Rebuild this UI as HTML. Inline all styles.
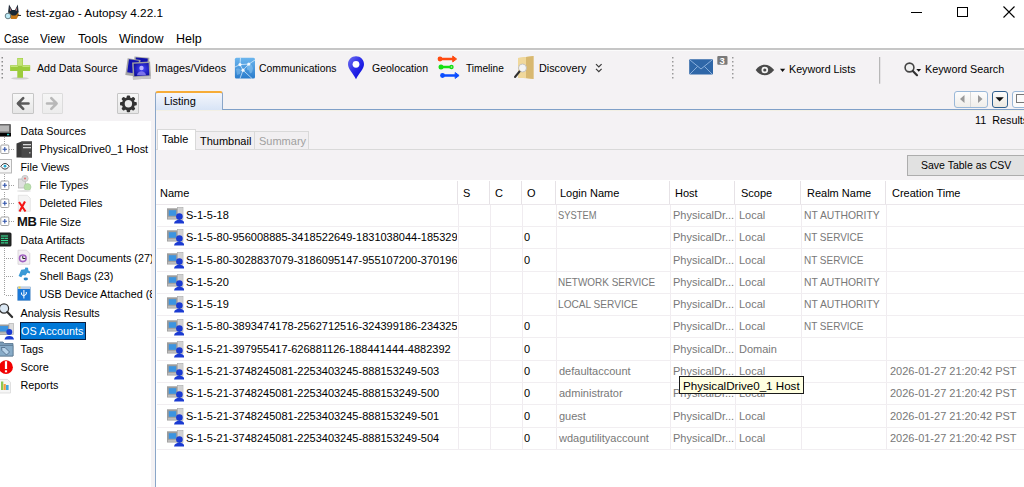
<!DOCTYPE html>
<html><head><meta charset="utf-8">
<style>
*{box-sizing:border-box}
html,body{margin:0;padding:0}
body{width:1024px;height:487px;overflow:hidden;position:relative;background:#f4f2f4;font-family:"Liberation Sans",sans-serif;color:#000}
.a{position:absolute}
.t{position:absolute;white-space:pre;font-size:11px;line-height:13px}
#title{left:0;top:0;width:1024px;height:30px;background:#fff}
#menu{left:0;top:30px;width:1024px;height:18px;background:#fff}
#mline{left:0;top:48px;width:1024px;height:2px;background:#c6c6c6}
#tbar{left:0;top:50px;width:1024px;height:38px;background:#f4f2f4;border-top:1px solid #fbfbfb}
#left{left:0;top:121px;width:151px;height:366px;background:#fff}
#vline{left:155px;top:110px;width:1px;height:377px;background:#8aa6c8}
#tabline{left:155px;top:109px;width:869px;height:1px;background:#7fa0c8}
#table{left:156px;top:180px;width:868px;height:307px;background:#fff}
.g{color:#787878}
.hd{border-left:1px solid #e8e4e8}
.rl{position:absolute;left:157px;width:867px;height:1px;background:#f1eef1}
.ic{position:absolute;left:167px;width:17px;height:18px;display:block}
.nm{left:186px;width:271px;overflow:hidden}
.tr{position:absolute;white-space:pre;font-size:10.8px;line-height:13px}
#left{overflow:hidden}
</style></head><body>
<div id="title" class="a"></div>
<div id="menu" class="a"></div>
<div id="mline" class="a"></div>
<div id="tbar" class="a"></div>
<div id="left" class="a"></div>
<div id="table" class="a"></div>
<div id="tabline" class="a"></div>
<div id="vline" class="a"></div>

<!-- title -->
<div class="t" style="left:26px;top:6px;font-size:11.8px;line-height:14px">test-zgao - Autopsy 4.22.1</div>
<div class="a" style="left:911px;top:12px;width:11px;height:1px;background:#000"></div>
<div class="a" style="left:957px;top:7px;width:11px;height:10px;border:1px solid #000"></div>
<svg class="a" style="left:1003px;top:6px" width="12" height="12"><path d="M0.5 0.5L11.5 11.5M11.5 0.5L0.5 11.5" stroke="#000" stroke-width="1.1"/></svg>

<!-- menu -->
<div class="t" style="left:4px;top:32px;font-size:12.5px;line-height:14px;transform:scaleX(0.85);transform-origin:0 0">Case</div>
<div class="t" style="left:40px;top:32px;font-size:12.5px;line-height:14px;transform:scaleX(0.93);transform-origin:0 0">View</div>
<div class="t" style="left:78px;top:32px;font-size:12.5px;line-height:14px">Tools</div>
<div class="t" style="left:119px;top:32px;font-size:12.5px;line-height:14px">Window</div>
<div class="t" style="left:176px;top:32px;font-size:12.5px;line-height:14px">Help</div>

<!-- toolbar -->
<div class="t" style="left:37px;top:62px;font-size:10.6px">Add Data Source</div>
<div class="t" style="left:155px;top:62px;font-size:10.8px">Images/Videos</div>
<div class="t" style="left:259px;top:62px;font-size:10.4px">Communications</div>
<div class="t" style="left:372px;top:62px;font-size:10.5px">Geolocation</div>
<div class="t" style="left:466px;top:62px;font-size:10.1px">Timeline</div>
<div class="t" style="left:539px;top:62px;font-size:10.8px">Discovery</div>
<div class="t" style="left:789px;top:63px;font-size:10.7px">Keyword Lists</div>
<div class="t" style="left:925px;top:63px;font-size:10.8px">Keyword Search</div>

<!-- toolbar icons -->
<svg class="a" style="left:0;top:50px" width="1024" height="38">
  <g fill="#8c8c8c">
    <rect x="1.5" y="7" width="1.5" height="1.5"/><rect x="1.5" y="11" width="1.5" height="1.5"/><rect x="1.5" y="15" width="1.5" height="1.5"/><rect x="1.5" y="19" width="1.5" height="1.5"/><rect x="1.5" y="23" width="1.5" height="1.5"/><rect x="1.5" y="27" width="1.5" height="1.5"/>
  </g>
  <!-- plus -->
  <ellipse cx="20" cy="28.3" rx="9" ry="1.2" fill="#d0d0d0"/>
  <path d="M17.3 8h5.7v7.2h7.2v5.7h-7.2v6.8h-5.7v-6.8h-7.2v-5.7h7.2z" fill="#9ccc3c"/>
  <path d="M17.8 8.5h4.7v7.2h7.2v1.2h-7.2v-1.2h-4.7v1.2h-7.2v-1.2h7.2z" fill="#c4e47a"/>
  <!-- images/videos -->
  <g transform="translate(126,7)">
    <rect x="8" y="0" width="15" height="11" fill="#a8a8a8" transform="rotate(5 15 5)"/>
    <rect x="9.5" y="1" width="12" height="6" fill="#1010a8" transform="rotate(5 15 5)"/>
    <rect x="0.5" y="2" width="13" height="17" fill="#a4a4a4" transform="rotate(8 7 10)"/>
    <rect x="2" y="3" width="10" height="13" fill="#1212b0" transform="rotate(8 7 10)"/>
    <rect x="6.5" y="5" width="18" height="17" fill="#a0a0a0" transform="rotate(-3 15 13)"/>
    <rect x="6.5" y="19.5" width="18" height="2.5" fill="#c4c4c4" transform="rotate(-3 15 13)"/>
    <rect x="8" y="6.3" width="15" height="12.5" fill="url(#ivg)" transform="rotate(-3 15 13)"/>
    <circle cx="15.5" cy="11" r="2.2" fill="#c8c0ff" opacity="0.9"/>
    <path d="M11 18.3c0.5-3 2.5-4 4.5-4s4 1 4.5 4z" fill="#8a80f0" opacity="0.85"/>
  </g>
  <!-- communications -->
  <defs>
    <linearGradient id="cg" x1="0" y1="0" x2="0" y2="1"><stop offset="0" stop-color="#6cb6ee"/><stop offset="1" stop-color="#2a7ccc"/></linearGradient>
    <radialGradient id="ivg" cx="0.55" cy="0.45" r="0.7"><stop offset="0" stop-color="#4848ff"/><stop offset="1" stop-color="#0a0a98"/></radialGradient>
    <linearGradient id="pg" x1="0" y1="0" x2="1" y2="1"><stop offset="0" stop-color="#7070f0"/><stop offset="0.5" stop-color="#2a2ae8"/><stop offset="1" stop-color="#0000d8"/></linearGradient>
  </defs>
  <rect x="234.9" y="7.7" width="20.1" height="20.8" rx="1.5" fill="url(#cg)"/>
  <path d="M247 14.5c2-1 4-0.5 5 1l1 3-1 4-2 1-1-3-2-1z" fill="#8cc4f0" opacity="0.6"/>
  <path d="M236 19c2-1 4 0 5 1l-1 4-3 1z" fill="#8cc4f0" opacity="0.5"/>
  <g stroke="#eaf6ff" stroke-width="0.9" fill="none" opacity="0.75">
    <path d="M240.5 7.7l-0.5 6.9 8.8-0.5 6.2-4.1M235 17l5-2.4 3 5.6-3 8.3M243 20.2l5.8-6.1M243 20.2l9 8.3"/>
  </g>
  <circle cx="240" cy="14.6" r="1.6" fill="#fff" opacity="0.9"/><circle cx="248.8" cy="14.1" r="1.6" fill="#fff" opacity="0.9"/><circle cx="243" cy="20.2" r="1.6" fill="#fff" opacity="0.9"/>
  <!-- geolocation -->
  <path d="M356 6.3c-4.5 0-8 3.5-8 8 0 4.5 5 9 8 15 3-6 8-10.5 8-15 0-4.5-3.5-8-8-8z" fill="url(#pg)"/>
  <circle cx="356" cy="14.3" r="3.4" fill="#fff"/>
  <!-- timeline -->
  <g stroke-width="2.6" stroke-linecap="round">
    <path d="M440 9h14" stroke="#ff4a10"/><circle cx="440" cy="9" r="2.4" fill="#ff4a10" stroke="none"/><path d="M453 6.3l3.6 2.7-3.6 2.7z" fill="#ff4a10" stroke="#ff4a10" stroke-width="1"/>
    <path d="M441 17h10" stroke="#12e012"/><circle cx="441" cy="17" r="2.5" fill="#12e012" stroke="none"/><circle cx="451.5" cy="17" r="2.2" fill="#12e012" stroke="none"/><circle cx="451.5" cy="17" r="0.8" fill="#c0f0c0" stroke="none"/>
    <path d="M442.5 25.5h14" stroke="#0a4cff"/><circle cx="442.5" cy="25.5" r="2.4" fill="#0a4cff" stroke="none"/><path d="M455.5 22.8l3.6 2.7-3.6 2.7z" fill="#0a4cff" stroke="#0a4cff" stroke-width="1"/>
  </g>
  <!-- discovery -->
  <path d="M518 8l15.5-2v23l-15.5-1.5z" fill="#e8cc8c"/>
  <path d="M526 7l7.5-1v23l-7.5-1z" fill="#d8b870"/>
  <path d="M518 8l8 -1v21l-8 0z" fill="#f0d89c"/>
  <circle cx="522.5" cy="18" r="4" fill="#f4f4f4" stroke="#b8b8b8" stroke-width="0.8"/>
  <path d="M519.5 21.5l-4.5 5.5" stroke="#303030" stroke-width="2" stroke-linecap="round"/>
  <!-- chevron -->
  <path d="M596 14.2l2.8 2.8 2.8-2.8M596 18.8l2.8 2.8 2.8-2.8" stroke="#3a3a3a" stroke-width="1.2" fill="none"/>
  <!-- separators -->
  <g fill="#9a9a9a">
    <rect x="672" y="7" width="1.5" height="1.5"/><rect x="672" y="11" width="1.5" height="1.5"/><rect x="672" y="15" width="1.5" height="1.5"/><rect x="672" y="19" width="1.5" height="1.5"/><rect x="672" y="23" width="1.5" height="1.5"/><rect x="672" y="27" width="1.5" height="1.5"/>
    <rect x="732" y="7" width="1.5" height="1.5"/><rect x="732" y="11" width="1.5" height="1.5"/><rect x="732" y="15" width="1.5" height="1.5"/><rect x="732" y="19" width="1.5" height="1.5"/><rect x="732" y="23" width="1.5" height="1.5"/><rect x="732" y="27" width="1.5" height="1.5"/>
  </g>
  <!-- mail -->
  <rect x="689.2" y="9.2" width="23.8" height="15.4" rx="1" fill="#2f67a8"/>
  <path d="M690 10l11 9 11-9M690 24l7.5-7.5M712 24l-7.5-7.5" stroke="#9fc0e8" stroke-width="0.8" fill="none"/>
  <rect x="717.3" y="5.9" width="10.2" height="8.8" rx="1" fill="#7a7a7a"/>
  <text x="719.5" y="13.6" font-family="Liberation Sans" font-size="9.5" font-weight="bold" fill="#fff">3</text>
  <!-- eye -->
  <path d="M755.7 20c2.5-3.5 5.5-5.2 9-5.2s6.5 1.7 9.5 5.2c-3 3.5-6 5.2-9.5 5.2s-6.5-1.7-9-5.2z" fill="#4a4a4a"/>
  <circle cx="764.8" cy="20" r="3.3" fill="#f4f4f4"/><circle cx="764.8" cy="20" r="1.6" fill="#4a4a4a"/>
  <path d="M780 18.7h5.2l-2.6 3.3z" fill="#111"/>
  <!-- separator solid -->
  <rect x="879.2" y="7" width="1" height="26.7" fill="#a8a8a8"/>
  <!-- magnifier -->
  <circle cx="909.5" cy="17.5" r="4.4" fill="#f0f0f0" stroke="#444" stroke-width="1.6"/>
  <path d="M912.8 21l4.2 4.2" stroke="#333" stroke-width="2.2" stroke-linecap="round"/>
  <path d="M916.3 19h4.8l-2.4 2.8z" fill="#111"/>
</svg>

<!-- app icon -->
<svg class="a" style="left:0;top:0" width="24" height="22">
  <path d="M9 4.6l3.2 5.5h2.8l2.8-5.5 0.8 7.5 -1 2-8.5 0-1-2z" fill="#1a2836"/>
  <path d="M9.8 7l1.4 3.3-1.2 1z M17.3 7l-0.6 4.3-1.3-1z" fill="#c07a7a"/>
  <path d="M9.5 12.5h8.5l1 2.5-2.5 4h-5.5l-2-3.5z" fill="#c87818"/>
  <path d="M9.3 11h9l-1 3-2 1.5h-3l-2-1.5z" fill="#1a2836"/>
  <path d="M17.5 15.2l3.5 0.3" stroke="#202020" stroke-width="1.1"/>
  <circle cx="8" cy="16" r="2.8" fill="#bdeaf6" stroke="#5a7078" stroke-width="0.9"/>
</svg>

<!-- back/forward/gear -->
<div class="a" style="left:12px;top:93px;width:22px;height:21px;border:1px solid #c6c6c6;border-radius:1px;background:linear-gradient(#f8f8f8,#e6e6e6)"></div>
<div class="a" style="left:42px;top:93px;width:21px;height:21px;border:1px solid #dcdcdc;border-radius:1px;background:linear-gradient(#f6f6f6,#ececec)"></div>
<div class="a" style="left:117px;top:93px;width:22px;height:21px;border:1px solid #c6c6c6;border-radius:1px;background:linear-gradient(#f8f8f8,#e6e6e6)"></div>
<svg class="a" style="left:0;top:88px" width="150" height="32">
  <path d="M28.5 15.5h-9.5M23.2 10.2l-5.3 5.3 5.3 5.3" stroke="#595959" stroke-width="2.6" fill="none" stroke-linecap="round" stroke-linejoin="round"/>
  <path d="M47 15.5h9.5M51.3 10.2l5.3 5.3-5.3 5.3" stroke="#b8b8b8" stroke-width="2.6" fill="none" stroke-linecap="round" stroke-linejoin="round"/>
  <g transform="translate(128.4,15.8)">
    <circle r="6.6" fill="#333"/>
    <g fill="#333">
      <rect x="-1.7" y="-8.4" width="3.4" height="4" rx="1"/>
      <rect x="-1.7" y="-8.4" width="3.4" height="4" rx="1" transform="rotate(45)"/>
      <rect x="-1.7" y="-8.4" width="3.4" height="4" rx="1" transform="rotate(90)"/>
      <rect x="-1.7" y="-8.4" width="3.4" height="4" rx="1" transform="rotate(135)"/>
      <rect x="-1.7" y="-8.4" width="3.4" height="4" rx="1" transform="rotate(180)"/>
      <rect x="-1.7" y="-8.4" width="3.4" height="4" rx="1" transform="rotate(225)"/>
      <rect x="-1.7" y="-8.4" width="3.4" height="4" rx="1" transform="rotate(270)"/>
      <rect x="-1.7" y="-8.4" width="3.4" height="4" rx="1" transform="rotate(315)"/>
    </g>
    <circle r="3.7" fill="#ececec"/>
  </g>
</svg>

<!-- right nav buttons -->
<div class="a" style="left:954px;top:91px;width:34px;height:17px;border:1px solid #9ab8d8;border-radius:3px;background:linear-gradient(#fdfdfd,#f0eeea)"></div>
<div class="a" style="left:970px;top:92px;width:1px;height:15px;background:#d8d8d8"></div>
<div class="a" style="left:992px;top:91px;width:16px;height:17px;border:1px solid #30608f;border-radius:3px;background:linear-gradient(#fdfdfd,#ece8e0)"></div>
<div class="a" style="left:1012px;top:91px;width:16px;height:17px;border:1px solid #9ab8d8;border-radius:3px;background:#fbfbfb"></div>
<svg class="a" style="left:950px;top:88px" width="74" height="22">
  <path d="M14.5 7v8l-4.5-4z" fill="#9a9a9a"/>
  <path d="M28 7v8l4.5-4z" fill="#9a9a9a"/>
  <path d="M45.5 9.3h8.3l-4.15 4.2z" fill="#111"/>
  <rect x="66.5" y="6.5" width="8" height="8" fill="none" stroke="#777" stroke-width="1"/>
</svg>

<!-- tree -->
<div class="a" style="left:0;top:0;width:152px;height:487px;overflow:hidden">
<svg class="a" style="left:0;top:121px" width="152" height="280">
  <!-- dotted lines -->
  <g fill="#a0a0a0">
    <path d="M4 16h1v1h-1zM4 18h1v1h-1zM4 20h1v1h-1zM4 22h1v1h-1z"/>
    <path d="M9 28h1v1h-1zM11 28h1v1h-1zM13 28h1v1h-1z"/>
    <path d="M4 53h1v1h-1zM4 55h1v1h-1zM4 57h1v1h-1zM4 59h1v1h-1zM4 71h1v1h-1zM4 73h1v1h-1zM4 75h1v1h-1zM4 77h1v1h-1zM4 89h1v1h-1zM4 91h1v1h-1zM4 93h1v1h-1zM4 95h1v1h-1z"/>
    <path d="M9 64h1v1h-1zM11 64h1v1h-1zM13 64h1v1h-1zM9 82h1v1h-1zM11 82h1v1h-1zM13 82h1v1h-1zM9 100h1v1h-1zM11 100h1v1h-1zM13 100h1v1h-1z"/>
    <path d="M4 127h1v1h-1zM4 129h1v1h-1zM4 131h1v1h-1zM4 133h1v1h-1zM4 135h1v1h-1zM4 137h1v1h-1zM4 139h1v1h-1zM4 141h1v1h-1zM4 143h1v1h-1zM4 145h1v1h-1zM4 147h1v1h-1zM4 149h1v1h-1zM4 151h1v1h-1zM4 153h1v1h-1zM4 155h1v1h-1zM4 157h1v1h-1zM4 159h1v1h-1zM4 161h1v1h-1zM4 163h1v1h-1zM4 165h1v1h-1zM4 167h1v1h-1zM4 169h1v1h-1zM4 171h1v1h-1zM4 173h1v1h-1z"/>
    <path d="M6 137h1v1h-1zM8 137h1v1h-1zM10 137h1v1h-1zM12 137h1v1h-1zM6 155h1v1h-1zM8 155h1v1h-1zM10 155h1v1h-1zM12 155h1v1h-1zM6 174h1v1h-1zM8 174h1v1h-1zM10 174h1v1h-1zM12 174h1v1h-1z"/>
  </g>
  <!-- expander boxes -->
  <g>
    <rect x="0.8" y="24" width="8" height="8.5" rx="1" fill="#fff" stroke="#9a9a9a" stroke-width="0.9"/>
    <path d="M2.6 28.3h4.4M4.8 26v4.6" stroke="#2a4ea8" stroke-width="1.1"/>
    <rect x="0.8" y="60" width="8" height="8.5" rx="1" fill="#fff" stroke="#9a9a9a" stroke-width="0.9"/>
    <path d="M2.6 64.3h4.4M4.8 62v4.6" stroke="#2a4ea8" stroke-width="1.1"/>
    <rect x="0.8" y="78" width="8" height="8.5" rx="1" fill="#fff" stroke="#9a9a9a" stroke-width="0.9"/>
    <path d="M2.6 82.3h4.4M4.8 80v4.6" stroke="#2a4ea8" stroke-width="1.1"/>
    <rect x="0.8" y="96" width="8" height="8.5" rx="1" fill="#fff" stroke="#9a9a9a" stroke-width="0.9"/>
    <path d="M2.6 100.3h4.4M4.8 98v4.6" stroke="#2a4ea8" stroke-width="1.1"/>
  </g>
  <!-- Data sources HDD -->
  <rect x="-2" y="3" width="13" height="12.4" rx="1" fill="#6a6a6a"/>
  <rect x="0" y="4.5" width="9" height="6" fill="#b8b8b8"/>
  <rect x="-2" y="12" width="13" height="3.4" fill="#050505"/>
  <rect x="7" y="12.8" width="2.2" height="1.5" fill="#30c8c8"/>
  <!-- server -->
  <path d="M16.5 22.5l5-2h10.5v16h-15.5z" fill="#3a3a3a"/>
  <path d="M21.5 20.5h10.5v16h-10.5z" fill="#484848"/>
  <rect x="23" y="23" width="8" height="1.3" fill="#d8d8d8"/>
  <rect x="23" y="26" width="8" height="1.3" fill="#d8d8d8"/>
  <rect x="29" y="31" width="1.5" height="1.5" fill="#aaa"/>
  <!-- eye box -->
  <rect x="-1" y="38.5" width="12.5" height="13.5" fill="#f6f6f6" stroke="#b0b0b0" stroke-width="0.9"/>
  <path d="M0.8 45.3c1.4-1.9 2.8-2.8 4.2-2.8s2.8 0.9 4.2 2.8c-1.4 1.9-2.8 2.8-4.2 2.8s-2.8-0.9-4.2-2.8z" fill="#fff" stroke="#404040" stroke-width="1"/>
  <circle cx="5" cy="45.2" r="1.4" fill="#20a8d0"/>
  <!-- file types -->
  <rect x="18.5" y="58" width="7" height="9" fill="#e0e0e0" stroke="#b0b0b0" stroke-width="0.7"/>
  <circle cx="25" cy="57.5" r="3.2" fill="#d8d8d8" stroke="#b8b8b8" stroke-width="0.6"/>
  <circle cx="25" cy="57.5" r="1" fill="#e87070"/>
  <circle cx="27.5" cy="66" r="3.5" fill="#b8e0a8" stroke="#a8c8a0" stroke-width="0.6"/>
  <ellipse cx="24" cy="70" rx="7" ry="1" fill="#e4e4e4"/>
  <!-- deleted files -->
  <path d="M18.3 74.3h9l3 3v13h-12z" fill="#f4f4f4" stroke="#dcdcdc" stroke-width="0.7"/>
  <path d="M19 81l6.5 9.5M25 80.5l-5.5 10" stroke="#f41414" stroke-width="2.1"/>
  <!-- MB -->
  <text x="17" y="104.8" font-family="Liberation Sans" font-weight="bold" font-size="13" fill="#111" letter-spacing="-0.4">MB</text>
  <!-- data artifacts terminal -->
  <rect x="-2" y="111.4" width="13.5" height="14" rx="1.5" fill="#1c1c1c"/>
  <rect x="-1" y="112.6" width="11.3" height="11.6" fill="#243028"/>
  <path d="M1 115h7M1 117.3h3.5M5 117.3h3M1 119.6h7M1 121.9h3.5M5 121.9h3" stroke="#3af0a0" stroke-width="1"/>
  <!-- recent docs -->
  <path d="M18 129.2h8.5l3.3 3.3v10.8h-11.8z" fill="#f2eef2" stroke="#d0ccd0" stroke-width="0.7"/>
  <circle cx="22.8" cy="137.3" r="3.3" fill="#f4eef6" stroke="#a060c0" stroke-width="1.6"/>
  <path d="M22.8 135v2.5h2.6" stroke="#222" stroke-width="1" fill="none"/>
  <!-- shell bags -->
  <path d="M18.6 155l2.6-6.2 3.6-0.6 0.6-1.6 2.6 0.2 0.4 2.6 1.8 1.4-0.4 1.6-2.4-0.6-2 2.6-2.6-0.4-1.6 2.2z" fill="#3a9ad6"/><ellipse cx="25.8" cy="158" rx="2.2" ry="1.4" fill="#2a86c6"/>
  <!-- usb -->
  <rect x="17.7" y="166" width="12.5" height="13.5" fill="#1a78d8" stroke="#6a98c8" stroke-width="0.6"/>
  <rect x="17.7" y="166" width="12.5" height="2" fill="#c8d0e0"/>
  <rect x="18.5" y="165.5" width="2" height="2" fill="#f0d040"/>
  <path d="M23.9 169v8.5M21.5 171.5v2l2.4 1.5M26.3 171v2.2l-2.4 1.5" stroke="#fff" stroke-width="1" fill="none"/>
  <!-- analysis results magnifier -->
  <circle cx="4" cy="187.5" r="4.6" fill="#dbe8f4" stroke="#303030" stroke-width="1.2"/>
  <path d="M7.3 191l4.8 5" stroke="#303030" stroke-width="2.2" stroke-linecap="round"/>
  <!-- os accounts -->
  <rect x="9" y="202.5" width="4.5" height="11" fill="#dcdcdc" stroke="#a8a8a8" stroke-width="0.6"/>
  <rect x="-2" y="203.5" width="11" height="10.5" fill="#9c9c9c"/>
  <rect x="-1" y="205" width="9" height="5.5" fill="#3c94e0"/>
  <rect x="-1" y="211.5" width="9" height="1.8" fill="#c0c0c0"/>
  <circle cx="9.3" cy="211" r="3" fill="#1a3ad2"/>
  <path d="M4.5 218.5c0.4-2.5 2.2-3.6 4.8-3.6s4.4 1.1 4.7 3.6z" fill="#1a3ad2"/>
  <!-- tags folder -->
  <path d="M-2 221h5l1.5 1.5h8.5v12.5h-15z" fill="#7a9cb8" stroke="#56728c" stroke-width="0.8"/>
  <path d="M-2 224.5h15v10.5h-15z" fill="#88acc8" stroke="#56728c" stroke-width="0.7"/>
  <path d="M1.5 226.5h3.5l4.5 4.5-3 3-4.5-4.5z" fill="#b8d4ea" stroke="#405a78" stroke-width="0.7"/>
  <!-- score -->
  <circle cx="6" cy="246.2" r="6.9" fill="#f20000"/>
  <rect x="4.9" y="240.2" width="2.2" height="7.8" fill="#fff"/>
  <rect x="4.9" y="249.3" width="2.2" height="2" fill="#fff"/>
  <!-- reports -->
  <path d="M-1 258.4h8.5l3 3v10.6h-11.5z" fill="#f6f6f6" stroke="#d4d4d4" stroke-width="0.7"/>
  <rect x="1" y="260.5" width="2.3" height="8.5" fill="#8cc850"/>
  <rect x="3.6" y="263" width="2.2" height="6" fill="#f0a040"/>
  <rect x="6" y="264" width="2.6" height="5" fill="#40a8e0"/>
</svg>
<div class="a" style="left:20px;top:322px;width:66px;height:18px;background:#0078d7;border:1px solid #0a1e40"></div>
<div class="tr" style="left:20.5px;top:124.5px">Data Sources</div>
<div class="tr" style="left:39.5px;top:142.7px">PhysicalDrive0_1 Host</div>
<div class="tr" style="left:20.5px;top:160.9px">File Views</div>
<div class="tr" style="left:39.5px;top:179.1px">File Types</div>
<div class="tr" style="left:39.5px;top:197.3px">Deleted Files</div>
<div class="tr" style="left:39.5px;top:215.5px">File Size</div>
<div class="tr" style="left:20.5px;top:233.7px">Data Artifacts</div>
<div class="tr" style="left:39.5px;top:251.9px">Recent Documents (27)</div>
<div class="tr" style="left:39.5px;top:270.1px">Shell Bags (23)</div>
<div class="tr" style="left:39.5px;top:288.3px">USB Device Attached (8)</div>
<div class="tr" style="left:20.5px;top:306.5px">Analysis Results</div>
<div class="tr" style="left:21px;top:324.7px;color:#fff">OS Accounts</div>
<div class="tr" style="left:20.5px;top:342.9px">Tags</div>
<div class="tr" style="left:20.5px;top:361.1px">Score</div>
<div class="tr" style="left:20.5px;top:379.3px">Reports</div>
</div>

<!-- listing tab -->
<div class="a" style="left:155px;top:91px;width:68px;height:19px;border:1px solid #8aa6c8;border-bottom:none;border-top:2px solid #f6ac38;border-radius:3px 3px 0 0;background:linear-gradient(#f4f6fc,#d8e4f6)"></div>
<div class="t" style="left:164px;top:95px">Listing</div>
<div class="t" style="left:975px;top:114px;font-size:10.8px">11  Results</div>
<div class="a" style="left:156px;top:110px;width:868px;height:1px;background:#f2f0e4"></div>

<!-- sub tabs -->
<div class="a" style="left:156px;top:149px;width:868px;height:1px;background:#d9d9d9"></div>
<div class="a" style="left:157px;top:129px;width:39px;height:21px;background:#fff;border:1px solid #d9d9d9;border-bottom:none"></div>
<div class="a" style="left:195px;top:131px;width:60px;height:18px;background:#f1eff1;border:1px solid #d9d9d9;border-bottom:none"></div>
<div class="a" style="left:254px;top:131px;width:55px;height:18px;background:#f1eff1;border:1px solid #d9d9d9;border-bottom:none"></div>
<div class="t" style="left:162px;top:133px">Table</div>
<div class="t" style="left:200px;top:135px">Thumbnail</div>
<div class="t" style="left:259px;top:135px;color:#a0a0a0">Summary</div>

<!-- save button -->
<div class="a" style="left:907px;top:155px;width:125px;height:21px;background:#e1e1e1;border:1px solid #adadad"></div>
<div class="t" style="left:921px;top:159px;font-size:10.5px">Save Table as CSV</div>


<!-- table -->
<svg width="0" height="0" style="position:absolute"><defs><symbol id="osa" viewBox="0 0 17 18">
<rect x="10.4" y="0.3" width="5.6" height="12.2" fill="#dcdcdc" stroke="#a8a8a8" stroke-width="0.6"/>
<path d="M11.5 2h3.5M11.5 4h3.5M11.5 6h3.5" stroke="#b8b8b8" stroke-width="0.6"/>
<rect x="0" y="1.3" width="10.4" height="11.2" fill="#9c9c9c"/>
<rect x="1.8" y="3.2" width="7.4" height="5.6" fill="#3c94e0"/>
<rect x="0.8" y="9.8" width="8.8" height="2" fill="#bdbdbd"/>
<circle cx="12.4" cy="9.6" r="3.3" fill="#1a3ad2"/>
<path d="M7 16.6c0.4-2.6 2.4-3.8 5.4-3.8s4.8 1.2 5 3.8z" fill="#1a3ad2"/>
</symbol></defs></svg>
<div class="a" style="left:156px;top:204px;width:868px;height:1px;background:#ebe7eb"></div>
<div class="a" style="left:457px;top:181px;width:1px;height:23px;background:#e6e2e6"></div>
<div class="a" style="left:458px;top:205px;width:1px;height:245px;background:#f0ecf0"></div>
<div class="a" style="left:489px;top:181px;width:1px;height:23px;background:#e6e2e6"></div>
<div class="a" style="left:490px;top:205px;width:1px;height:245px;background:#f0ecf0"></div>
<div class="a" style="left:521px;top:181px;width:1px;height:23px;background:#e6e2e6"></div>
<div class="a" style="left:522px;top:205px;width:1px;height:245px;background:#f0ecf0"></div>
<div class="a" style="left:555px;top:181px;width:1px;height:23px;background:#e6e2e6"></div>
<div class="a" style="left:556px;top:205px;width:1px;height:245px;background:#f0ecf0"></div>
<div class="a" style="left:669px;top:181px;width:1px;height:23px;background:#e6e2e6"></div>
<div class="a" style="left:670px;top:205px;width:1px;height:245px;background:#f0ecf0"></div>
<div class="a" style="left:734px;top:181px;width:1px;height:23px;background:#e6e2e6"></div>
<div class="a" style="left:735px;top:205px;width:1px;height:245px;background:#f0ecf0"></div>
<div class="a" style="left:800px;top:181px;width:1px;height:23px;background:#e6e2e6"></div>
<div class="a" style="left:801px;top:205px;width:1px;height:245px;background:#f0ecf0"></div>
<div class="a" style="left:885px;top:181px;width:1px;height:23px;background:#e6e2e6"></div>
<div class="a" style="left:886px;top:205px;width:1px;height:245px;background:#f0ecf0"></div>
<div class="t" style="left:160px;top:187px">Name</div>
<div class="t" style="left:463px;top:187px">S</div>
<div class="t" style="left:495px;top:187px">C</div>
<div class="t" style="left:527px;top:187px">O</div>
<div class="t" style="left:560px;top:187px">Login Name</div>
<div class="t" style="left:675px;top:187px">Host</div>
<div class="t" style="left:741px;top:187px">Scope</div>
<div class="t" style="left:807px;top:187px">Realm Name</div>
<div class="t" style="left:892px;top:187px">Creation Time</div>
<div class="rl" style="top:226px"></div>
<svg class="ic" style="top:207px" width="17" height="18"><use href="#osa"/></svg>
<div class="t nm" style="top:209px">S-1-5-18</div>
<div class="t g" style="left:558px;top:209px;transform:scaleX(0.85);transform-origin:0 0">SYSTEM</div>
<div class="t g" style="left:673px;top:209px">PhysicalDr...</div>
<div class="t g" style="left:739px;top:209px">Local</div>
<div class="t g" style="left:804px;top:209px;transform:scaleX(0.94);transform-origin:0 0">NT AUTHORITY</div>
<div class="rl" style="top:248px"></div>
<svg class="ic" style="top:229px" width="17" height="18"><use href="#osa"/></svg>
<div class="t nm" style="top:231px">S-1-5-80-956008885-3418522649-1831038044-1853292631</div>
<div class="t" style="left:524px;top:231px">0</div>
<div class="t g" style="left:673px;top:231px">PhysicalDr...</div>
<div class="t g" style="left:739px;top:231px">Local</div>
<div class="t g" style="left:804px;top:231px;transform:scaleX(0.906);transform-origin:0 0">NT SERVICE</div>
<div class="rl" style="top:271px"></div>
<svg class="ic" style="top:252px" width="17" height="18"><use href="#osa"/></svg>
<div class="t nm" style="top:254px">S-1-5-80-3028837079-3186095147-955107200-3701964265</div>
<div class="t" style="left:524px;top:254px">0</div>
<div class="t g" style="left:673px;top:254px">PhysicalDr...</div>
<div class="t g" style="left:739px;top:254px">Local</div>
<div class="t g" style="left:804px;top:254px;transform:scaleX(0.906);transform-origin:0 0">NT SERVICE</div>
<div class="rl" style="top:293px"></div>
<svg class="ic" style="top:274px" width="17" height="18"><use href="#osa"/></svg>
<div class="t nm" style="top:276px">S-1-5-20</div>
<div class="t g" style="left:558px;top:276px;transform:scaleX(0.905);transform-origin:0 0">NETWORK SERVICE</div>
<div class="t g" style="left:673px;top:276px">PhysicalDr...</div>
<div class="t g" style="left:739px;top:276px">Local</div>
<div class="t g" style="left:804px;top:276px;transform:scaleX(0.94);transform-origin:0 0">NT AUTHORITY</div>
<div class="rl" style="top:315px"></div>
<svg class="ic" style="top:296px" width="17" height="18"><use href="#osa"/></svg>
<div class="t nm" style="top:298px">S-1-5-19</div>
<div class="t g" style="left:558px;top:298px;transform:scaleX(0.92);transform-origin:0 0">LOCAL SERVICE</div>
<div class="t g" style="left:673px;top:298px">PhysicalDr...</div>
<div class="t g" style="left:739px;top:298px">Local</div>
<div class="t g" style="left:804px;top:298px;transform:scaleX(0.94);transform-origin:0 0">NT AUTHORITY</div>
<div class="rl" style="top:337px"></div>
<svg class="ic" style="top:319px" width="17" height="18"><use href="#osa"/></svg>
<div class="t nm" style="top:320px">S-1-5-80-3893474178-2562712516-324399186-2343250000</div>
<div class="t" style="left:524px;top:320px">0</div>
<div class="t g" style="left:673px;top:320px">PhysicalDr...</div>
<div class="t g" style="left:739px;top:320px">Local</div>
<div class="t g" style="left:804px;top:320px;transform:scaleX(0.906);transform-origin:0 0">NT SERVICE</div>
<div class="rl" style="top:360px"></div>
<svg class="ic" style="top:341px" width="17" height="18"><use href="#osa"/></svg>
<div class="t nm" style="top:343px">S-1-5-21-397955417-626881126-188441444-4882392</div>
<div class="t" style="left:524px;top:343px">0</div>
<div class="t g" style="left:673px;top:343px">PhysicalDr...</div>
<div class="t g" style="left:739px;top:343px">Domain</div>
<div class="rl" style="top:382px"></div>
<svg class="ic" style="top:363px" width="17" height="18"><use href="#osa"/></svg>
<div class="t nm" style="top:365px">S-1-5-21-3748245081-2253403245-888153249-503</div>
<div class="t" style="left:524px;top:365px">0</div>
<div class="t g" style="left:559px;top:365px">defaultaccount</div>
<div class="t g" style="left:673px;top:365px">PhysicalDr...</div>
<div class="t g" style="left:739px;top:365px">Local</div>
<div class="t g" style="left:890px;top:365px">2026-01-27 21:20:42 PST</div>
<div class="rl" style="top:404px"></div>
<svg class="ic" style="top:385px" width="17" height="18"><use href="#osa"/></svg>
<div class="t nm" style="top:387px">S-1-5-21-3748245081-2253403245-888153249-500</div>
<div class="t" style="left:524px;top:387px">0</div>
<div class="t g" style="left:559px;top:387px">administrator</div>
<div class="t g" style="left:673px;top:387px">PhysicalDr...</div>
<div class="t g" style="left:739px;top:387px">Local</div>
<div class="t g" style="left:890px;top:387px">2026-01-27 21:20:42 PST</div>
<div class="rl" style="top:427px"></div>
<svg class="ic" style="top:408px" width="17" height="18"><use href="#osa"/></svg>
<div class="t nm" style="top:410px">S-1-5-21-3748245081-2253403245-888153249-501</div>
<div class="t" style="left:524px;top:410px">0</div>
<div class="t g" style="left:559px;top:410px">guest</div>
<div class="t g" style="left:673px;top:410px">PhysicalDr...</div>
<div class="t g" style="left:739px;top:410px">Local</div>
<div class="t g" style="left:890px;top:410px">2026-01-27 21:20:42 PST</div>
<div class="rl" style="top:449px"></div>
<svg class="ic" style="top:430px" width="17" height="18"><use href="#osa"/></svg>
<div class="t nm" style="top:432px">S-1-5-21-3748245081-2253403245-888153249-504</div>
<div class="t" style="left:524px;top:432px">0</div>
<div class="t g" style="left:559px;top:432px">wdagutilityaccount</div>
<div class="t g" style="left:673px;top:432px">PhysicalDr...</div>
<div class="t g" style="left:739px;top:432px">Local</div>
<div class="t g" style="left:890px;top:432px">2026-01-27 21:20:42 PST</div>
<!-- tooltip -->
<div class="a" style="left:679px;top:376px;width:125px;height:18px;background:#ffffe1;border:1px solid #1a1a1a"></div>
<div class="t" style="left:683px;top:379px;font-size:11.6px">PhysicalDrive0_1 Host</div>
</body></html>
